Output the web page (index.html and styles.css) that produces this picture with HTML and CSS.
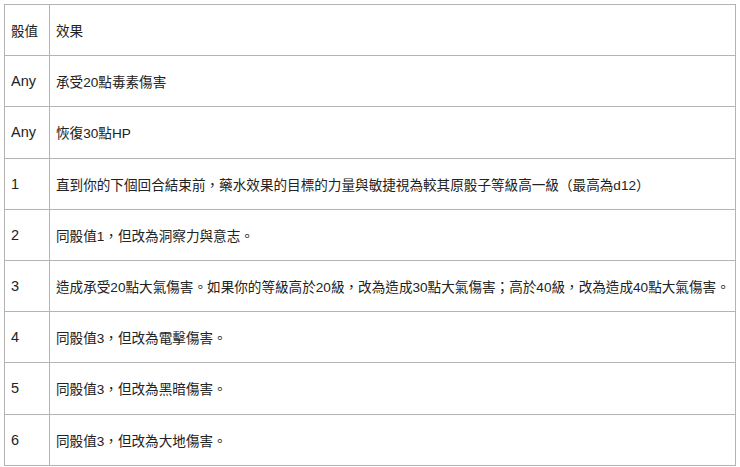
FILE: index.html
```html
<!DOCTYPE html>
<html lang="zh-Hant">
<head>
<meta charset="utf-8">
<title>骰值效果表</title>
<link rel="stylesheet" href="styles.css">
</head>
<body>
<table class="dice-table">
  <colgroup><col class="c-roll"><col class="c-effect"></colgroup>
  <tr><td class="col-roll col-head">骰值</td><td class="col-effect">效果</td></tr>
  <tr><td class="col-roll">Any</td><td class="col-effect">承受20點毒素傷害</td></tr>
  <tr><td class="col-roll">Any</td><td class="col-effect">恢復30點HP</td></tr>
  <tr><td class="col-roll">1</td><td class="col-effect">直到你的下個回合結束前，藥水效果的目標的力量與敏捷視為較其原骰子等級高一級（最高為d12）</td></tr>
  <tr><td class="col-roll">2</td><td class="col-effect">同骰值1，但改為洞察力與意志。</td></tr>
  <tr><td class="col-roll">3</td><td class="col-effect">造成承受20點大氣傷害。如果你的等級高於20級，改為造成30點大氣傷害；高於40級，改為造成40點大氣傷害。</td></tr>
  <tr><td class="col-roll">4</td><td class="col-effect">同骰值3，但改為電擊傷害。</td></tr>
  <tr><td class="col-roll">5</td><td class="col-effect">同骰值3，但改為黑暗傷害。</td></tr>
  <tr><td class="col-roll">6</td><td class="col-effect">同骰值3，但改為大地傷害。</td></tr>
</table>
</body>
</html>
```
FILE: styles.css
```css
html, body {
  margin: 0;
  padding: 0;
  background: #ffffff;
}
body {
  padding: 4px;
  font-family: "Liberation Sans", "Noto Sans CJK TC", sans-serif;
  font-size: 13.6px;
  color: #222222;
}
.dice-table {
  width: 732px;
  table-layout: fixed;
  border-collapse: collapse;
  border: 1px solid #b4b4b4;
}
.c-roll {
  width: 45px;
}
.dice-table tr {
  height: 51.2px;
}
.dice-table td {
  border: 1px solid #b4b4b4;
  padding: 0 0 0 6px;
  vertical-align: middle;
  white-space: nowrap;
  overflow: visible;
}
.col-roll {
  font-size: 14.5px;
  padding-left: 5px;
}
.col-roll.col-head {
  font-size: 13.6px;
}
```
